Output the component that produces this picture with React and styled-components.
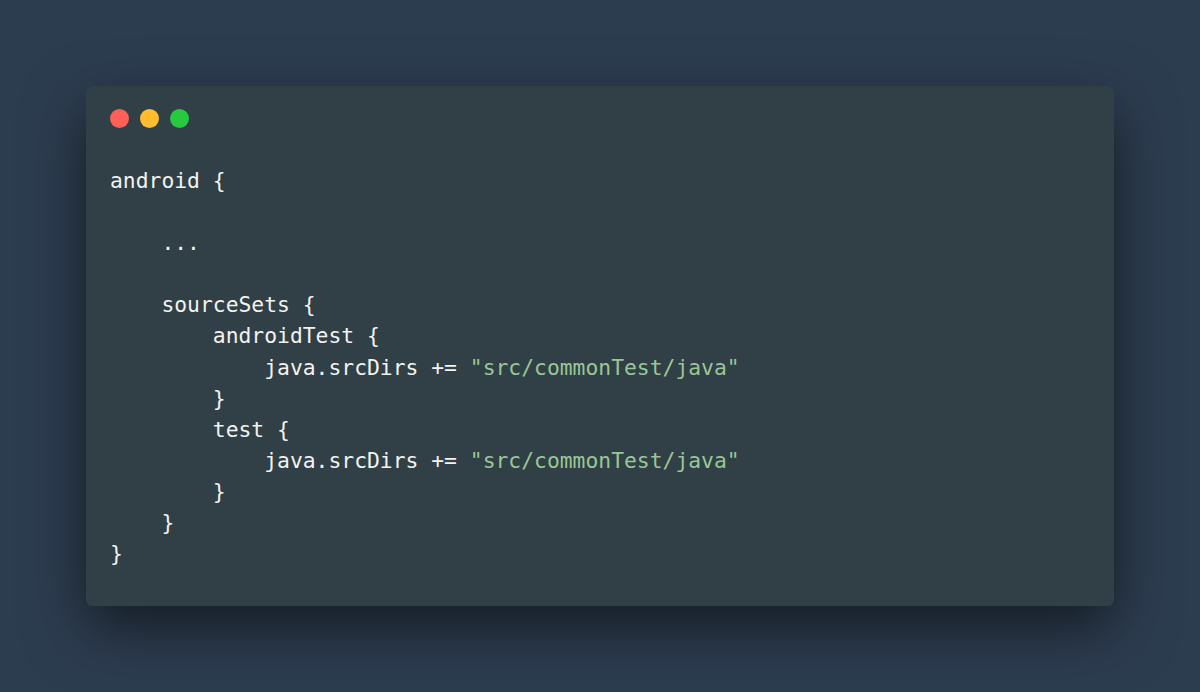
import React from 'react';
import styled, { createGlobalStyle } from 'styled-components';

const GlobalStyle = createGlobalStyle`
  html, body {
    margin: 0;
    padding: 0;
    background: #2d3d50;
  }
`;

const Page = styled.div`
  display: flex;
  align-items: center;
  justify-content: center;
  width: 1200px;
  height: 692px;
  box-sizing: border-box;
  background: #2d3d50;
`;

const Window = styled.div`
  width: 1028px;
  height: 520px;
  box-sizing: border-box;
  padding: 23px 24px 0;
  border-radius: 6px;
  background: #313f47;
  box-shadow: 0 22px 60px rgba(0, 0, 0, 0.55);
`;

const Controls = styled.div`
  display: flex;
  gap: 11px;
`;

const Dot = styled.span`
  width: 19px;
  height: 19px;
  border-radius: 50%;
  background: ${({ color }) => color};
`;

const Code = styled.pre`
  margin: 37px 0 0;
  font-family: 'DejaVu Sans Mono', monospace;
  font-size: 21.35px;
  line-height: 31.1px;
  color: #f2f2f0;
`;

const Str = styled.span`
  color: #99c794;
`;

const lines = [
  'android {',
  '',
  '    ...',
  '',
  '    sourceSets {',
  '        androidTest {',
  ['            java.srcDirs += ', '"src/commonTest/java"'],
  '        }',
  '        test {',
  ['            java.srcDirs += ', '"src/commonTest/java"'],
  '        }',
  '    }',
  '}',
];

const App = () => (
  <>
    <GlobalStyle />
    <Page>
      <Window>
        <Controls>
          <Dot color="#ff5f56" />
          <Dot color="#ffbd2e" />
          <Dot color="#27c93f" />
        </Controls>
        <Code>
          {lines.map((line, i) => (
            <React.Fragment key={i}>
              {Array.isArray(line) ? (
                <>
                  {line[0]}
                  <Str>{line[1]}</Str>
                </>
              ) : (
                line
              )}
              {'\n'}
            </React.Fragment>
          ))}
        </Code>
      </Window>
    </Page>
  </>
);

export default App;
